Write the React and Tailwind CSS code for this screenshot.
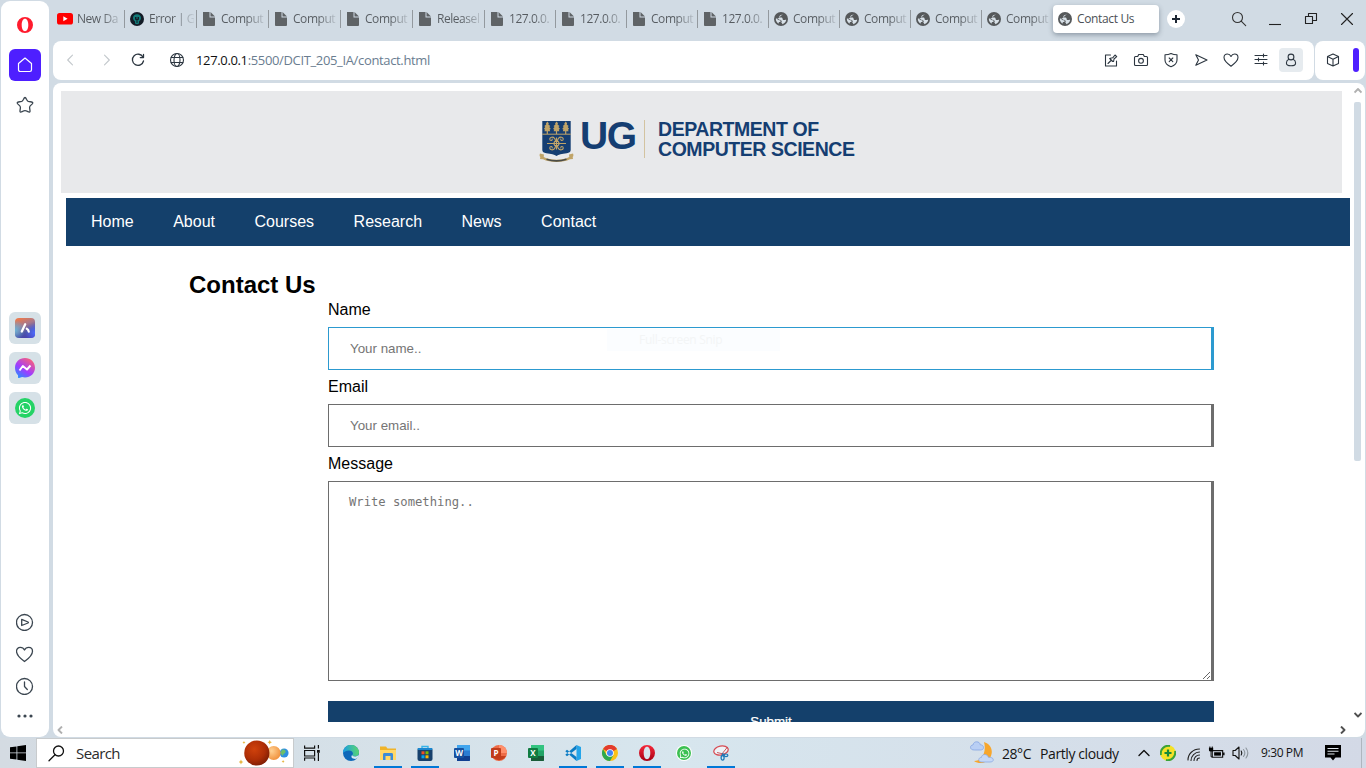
import React from "react";
import { FaWhatsapp } from "react-icons/fa";

const UI = "font-['Open_Sans','Noto_Sans',sans-serif]";
const ARIAL = "font-['Liberation_Sans',Arial,sans-serif]";

function FileIcon() {
  return (
    <svg width="14" height="16" viewBox="0 0 14 16" className="shrink-0">
      <path d="M1 1h6.500v5.500H13v7.300c0 .8-.4 1.200-1.200 1.200H2.200C1.400 15 1 14.600 1 13.800z" fill="#5f6366" />
      <path d="M8.500 1L13 5.500H8.500z" fill="#5f6366" />
    </svg>
  );
}

function EarthIcon() {
  return (
    <svg width="14" height="14" viewBox="0 0 14 14" className="shrink-0">
      <circle cx="7" cy="7" r="7" fill="#55585a" />
      <path d="M9.300 1.800c-.2 1-1.300 1-2.300 1.200-1 .3-1.700 1-1.700 1.900 0 .8.800.7 1.700.7s1.600.3 1.600 1.200.3 1.300 1.300 1.300 1.300-.4 2.300-.3c-.2 2-1.700 3.900-4 4.400.2-.9-.2-1.400-1-1.500.6-.9.700-1.700.1-2.300C6.600 7.700 5.500 8 4.700 7.200 4 6.600 3 6.300 1.800 6.700c0 2.300 1.300 4.200 3.200 5.100-.7-1-.3-1.700.4-1.900.7-.1 1.300-.4 1.300-1 0-.4-.4-.6-.9-.6-1 0-1.700-.5-2.600-1" fill="#d8e1e8" />
    </svg>
  );
}

function YoutubeIcon() {
  return (
    <svg width="16" height="12" viewBox="0 0 16 12" className="shrink-0">
      <rect width="16" height="11.500" rx="2.600" fill="#f00" />
      <path d="M6.300 3.300v5l4.300-2.500z" fill="#fff" />
    </svg>
  );
}

function GhostIcon() {
  return (
    <svg width="14" height="14" viewBox="0 0 14 14" className="shrink-0">
      <circle cx="7" cy="7" r="7" fill="#131b26" />
      <path d="M7 2.200c2.400 0 4 1.600 4 3.800 0 1.600-.9 2.700-2 3.500v2.100c-1.200.7-2.800.7-4 0V9.500C3.900 8.700 3 7.600 3 6c0-2.200 1.600-3.800 4-3.800z" fill="#127a78" />
      <path d="M7 5v6M5.500 5v2.500h3V5" stroke="#131b26" strokeWidth="1" fill="none" />
    </svg>
  );
}

const tabs = [
  ["yt", "New Da", true],
  ["gh", "Error | G", true],
  ["file", "Comput", true],
  ["file", "Comput", true],
  ["file", "Comput", true],
  ["file", "Releasel", true],
  ["file", "127.0.0.", false],
  ["file", "127.0.0.", false],
  ["file", "Comput", false],
  ["file", "127.0.0.", false],
  ["earth", "Comput", false],
  ["earth", "Comput", false],
  ["earth", "Comput", false],
  ["earth", "Comput", false],
];

const tabIcons = { yt: <YoutubeIcon />, gh: <GhostIcon />, file: <FileIcon />, earth: <EarthIcon /> };

function Tab({ kind, label, wide, last }) {
  return (
    <div className={`relative flex h-[38px] shrink-0 items-center pl-[4px] ${wide ? "w-[72px]" : "w-[71px]"}`}>
      <span className="flex w-[16px] shrink-0 justify-center">{tabIcons[kind]}</span>
      <span className="ml-[4px] w-[45px] whitespace-nowrap bg-linear-to-r from-[#565b60] from-55% to-[#565b6018] bg-clip-text text-[12px] leading-[18px] tracking-[-0.45px] text-transparent">
        {label}
      </span>
      {!last && <span className="absolute right-0 top-[10px] h-[18px] w-px bg-[#93999e]" />}
    </div>
  );
}

function Ico({ children, w = 16, h = 16, vb, sw = 1.1, color = "#2c3640", className = "" }) {
  return (
    <svg width={w} height={h} viewBox={vb || `0 0 ${w} ${h}`} fill="none" stroke={color} strokeWidth={sw} strokeLinecap="round" strokeLinejoin="round" className={`shrink-0 ${className}`}>
      {children}
    </svg>
  );
}

function TabBar() {
  return (
    <div className="flex h-[41px] items-start">
      {tabs.map(([k, l, w], i) => (
        <Tab key={i} kind={k} label={l} wide={w} last={i === tabs.length - 1} />
      ))}
      <div className="mt-[5px] flex h-[28px] w-[106px] shrink-0 items-center rounded-[4px] bg-white pl-[5px] shadow-[0_2px_5px_rgba(60,75,90,0.45)]">
        <EarthIcon />
        <span className="ml-[5px] text-[12px] leading-[18px] tracking-[-0.350px] text-[#4c5156]">Contact Us</span>
      </div>
      <div className="ml-[8px] mt-[10px] flex size-[18px] items-center justify-center rounded-full bg-white">
        <Ico w={8} h={8} sw={2} color="#1d2733"><path d="M4 0v8M0 4h8" strokeLinecap="butt" /></Ico>
      </div>
      <div className="ml-[46px] mt-[11px] flex h-[16px] items-center">
        <Ico color="#333"><circle cx="6.500" cy="6.500" r="5" /><path d="M10.200 10.200l4.500 4.500" /></Ico>
        <Ico className="ml-[21px]" w={14} color="#222"><path d="M1 13.500h12" strokeLinecap="butt" /></Ico>
        <Ico className="ml-[22px]" w={14} color="#222"><path d="M1.500 5.500h7v7h-7zM4.500 5.500v-3h8v7h-4" /></Ico>
        <Ico className="ml-[22px]" w={14} color="#222"><path d="M1.500 2.500l11 11M12.500 2.500l-11 11" /></Ico>
      </div>
    </div>
  );
}

function AddressBar() {
  return (
    <div className="flex h-[39px] gap-px">
      <div className="flex w-[1261px] items-center rounded-[8px] bg-white pb-px">
        <Ico className="ml-[9px]" color="#c3c8cc"><path d="M10.500 3.200L5.700 8l4.800 4.800" /></Ico>
        <Ico className="ml-[21px]" color="#c3c8cc"><path d="M5.500 3.200L10.300 8l-4.800 4.800" /></Ico>
        <Ico className="ml-[15px]" sw={1.300}><path d="M13 5.200A5.600 5.600 0 1 0 13.500 9M13.500 2.400v3.200h-3.200" /></Ico>
        <Ico className="ml-[23px]"><circle cx="8" cy="8" r="6.500" /><ellipse cx="8" cy="8" rx="3" ry="6.500" /><path d="M2.200 5.500h11.600M2.200 10.500h11.600" /></Ico>
        <span className="ml-[11px] w-[260px] whitespace-nowrap text-[13px] leading-[20px] tracking-[-0.350px] text-[#6a7d90]">
          <span className="text-[#111]">127.0.0.1</span>:5500/DCIT_205_IA/contact.html
        </span>
        <div className="ml-auto mr-[11px] flex items-center gap-[14px]">
          <Ico><path d="M7.500 3H2.500v11h11V9M5 11.500l3-3M6.700 6.500l3 3M7.300 6.200l2.400-.4 2.300-2.800 1.700 1.700-2.700 2.300-.4 2.400" /></Ico>
          <Ico><path d="M1.500 5.500c0-.5.500-1 1-1h2.200l1-2h4.600l1 2h2.200c.5 0 1 .5 1 1v7c0 .5-.5 1-1 1h-11c-.5 0-1-.5-1-1z" /><circle cx="8" cy="8.800" r="2.400" /></Ico>
          <Ico><path d="M8 1.500c2 1 4 1.300 6 1.300V8c0 3.300-2.500 5.500-6 6.700C4.500 13.500 2 11.300 2 8V2.800c2 0 4-.3 6-1.300zM6.200 6l3.600 3.600M9.800 6L6.200 9.600" /></Ico>
          <Ico><path d="M2.800 2.800L14 8 2.800 13.200 5.500 8z" /></Ico>
          <Ico><path d="M8 14.200C5 12 1 9 1 5.500 1 3.500 2.500 2 4.400 2 6 2 7.300 3 8 4.400 8.700 3 10 2 11.600 2 13.500 2 15 3.500 15 5.500 15 9 11 12 8 14.200z" /></Ico>
          <Ico sw={1.100}><path d="M2 3.500h12M2 7.500h12M2 11.500h12M10.500 2v3M5.500 6v3M10.500 10v3" /></Ico>
          <div className="-ml-[4px] flex size-[24px] items-center justify-center rounded-[4px] bg-[#e6ebef]">
            <Ico><circle cx="8" cy="5" r="2.900" /><path d="M5.800 7.300C4 8.200 3.400 9.700 3.400 11c0 2.200 1.600 2.800 4.600 2.800s4.600-.6 4.600-2.800c0-1.300-.6-2.800-2.400-3.700" /></Ico>
          </div>
        </div>
      </div>
      <div className="flex w-[50px] items-center rounded-[8px] bg-white pb-px pl-[10px]">
        <Ico><path d="M8 2l5.500 2.500v7L8 14l-5.500-2.500v-7zM2.500 4.500L8 7.200l5.500-2.700M8 7.200V14" /></Ico>
        <span className="ml-[12px] h-[24px] w-[6px] rounded-[3px] bg-[#4e1fff]" />
      </div>
    </div>
  );
}

function OperaO({ size, id, a = "#ff1b2d", b = "#c8102a" }) {
  return (
    <svg width={size} height={size} viewBox="0 0 16 16" className="shrink-0">
      <defs><linearGradient id={id} x1="0" y1="0" x2="0" y2="1"><stop stopColor={a} /><stop offset="1" stopColor={b} /></linearGradient></defs>
      <path fillRule="evenodd" fill={`url(#${id})`} d="M8 0a8 8 0 1 0 0 16A8 8 0 1 0 8 0zM8 1.800c2 0 3.300 2.700 3.300 6.200S10 14.200 8 14.200 4.700 11.500 4.700 8 6 1.800 8 1.800z" />
    </svg>
  );
}

function Sidebar() {
  const c = "#3b4650";
  return (
    <div className="ml-px mt-px flex h-[736px] w-[48px] shrink-0 flex-col items-center rounded-[9px] bg-white">
      <div className="mt-[16px]"><OperaO size={16} id="opSide" b="#ff1b2d" /></div>
      <div className="mt-[16px] flex size-[32px] items-center justify-center rounded-[6px] bg-[#4e1fff]">
        <Ico color="#fff" sw={1.200}><path d="M1.500 6.500L8 1l6.500 5.500v6.300c0 1.200-.7 1.700-1.700 1.700H3.200c-1 0-1.700-.5-1.700-1.700z" /></Ico>
      </div>
      <Ico className="mt-[15px]" w={18} h={18} color={c} sw={1.300}><path d="M9 1.500c.6 0 1 .7 1.600 2 .5 1 .9 1.700 1.600 1.900l3.400.6c1.400.3 1.500 1 .7 1.900l-2.100 2c-.6.600-.7 1.200-.6 2l.4 2.700c.2 1.400-.4 1.800-1.500 1.200-1.200-.5-2.400-1.100-3.500-1.100s-2.300.6-3.500 1.100c-1.100.600-1.700.2-1.500-1.200l.4-2.700c.1-.8 0-1.400-.6-2l-2.100-2C.9 7 1 6.300 2.400 6l3.400-.6c.7-.2 1.100-.9 1.600-1.900.6-1.300 1-2 1.600-2z" /></Ico>
      <div className="mt-[198px] flex flex-col gap-[8px]">
        <div className="flex size-[32px] items-center justify-center rounded-[6px] bg-[#d6e1e7]">
          <svg width="20" height="20" viewBox="0 0 20 20">
            <defs>
              <linearGradient id="aria" x1=".3" y1="0" x2=".7" y2="1"><stop stopColor="#e8794f" /><stop offset=".35" stopColor="#a8788c" /><stop offset=".7" stopColor="#4b55a8" /><stop offset="1" stopColor="#4a3fae" /></linearGradient>
              <radialGradient id="ariaL" cx="0" cy=".6" r=".5"><stop stopColor="#6ab4d8" /><stop offset="1" stopColor="#6ab4d8" stopOpacity="0" /></radialGradient>
              <radialGradient id="ariaR" cx="1" cy=".75" r=".5"><stop stopColor="#4f6cff" /><stop offset="1" stopColor="#4f6cff" stopOpacity="0" /></radialGradient>
            </defs>
            <rect width="20" height="20" rx="4" fill="url(#aria)" /><rect width="20" height="20" rx="4" fill="url(#ariaL)" /><rect width="20" height="20" rx="4" fill="url(#ariaR)" />
            <path d="M10.200 6.300L6.800 13.500M11.800 10.800c1.200.5 1.800 1.500 1.900 2.700" stroke="#fff" strokeWidth="2.300" strokeLinecap="round" fill="none" />
          </svg>
        </div>
        <div className="flex size-[32px] items-center justify-center rounded-[6px] bg-[#d6e1e7]">
          <svg width="20" height="20" viewBox="0 0 20 20">
            <defs><linearGradient id="msg" x1=".1" y1="1" x2=".8" y2="0"><stop stopColor="#1a96ff" /><stop offset=".45" stopColor="#a03cff" /><stop offset="1" stopColor="#ff6372" /></linearGradient></defs>
            <path d="M10 0c5.700 0 10 4.200 10 9.700s-4.300 9.700-10 9.700c-1 0-2-.1-2.900-.4L4 20c-.6.200-.9-.1-.9-.6l-.1-2.100C1.200 15.500 0 12.800 0 9.700 0 4.200 4.300 0 10 0z" fill="url(#msg)" />
            <path d="M4.500 12.500L7.800 8l4.200 3.500L15.500 7.500" fill="none" stroke="#fff" strokeWidth="1.900" strokeLinejoin="round" />
          </svg>
        </div>
        <div className="flex size-[32px] items-center justify-center rounded-[6px] bg-[#d6e1e7]">
          <span className="flex size-[20px] items-center justify-center rounded-full bg-[#25d366]"><FaWhatsapp size={14} color="#fff" /></span>
        </div>
      </div>
      <div className="mr-px mt-[189px] flex flex-col items-center gap-[14px]">
        <Ico w={18} h={18} vb="0.5 -0.5 18 18" color={c} sw={1.300}><circle cx="9" cy="9" r="8" /><path d="M6.200 5.800L12.500 8.500c.6.300.6.700 0 1L6.200 12z" /></Ico>
        <Ico w={18} h={18} vb="0.5 0 18 18" color={c} sw={1.300}><path d="M9 16.500C5.500 14 1 10.500 1 6.200 1 4 2.600 2.300 4.800 2.300 6.700 2.300 8.200 3.300 9 5c.8-1.700 2.300-2.700 4.200-2.700C15.400 2.300 17 4 17 6.200c0 4.300-4.500 7.800-8 10.300z" /></Ico>
        <Ico w={18} h={18} vb="0.5 -0.5 18 18" color={c} sw={1.300}><circle cx="9" cy="9" r="8" /><path d="M9 4.500V9l2.800 3" /></Ico>
      </div>
      <svg width="18" height="4" className="mt-[19px] shrink-0" fill={c}><circle cx="3" cy="2" r="1.600" /><circle cx="9" cy="2" r="1.600" /><circle cx="15" cy="2" r="1.600" /></svg>
    </div>
  );
}

function Crest() {
  const g = "#c0a468";
  return (
    <svg width="36" height="43" viewBox="0 0 36 43" className="shrink-0">
      <path d="M3.300 1h28.400v29c0 2-1.500 2.700-4 3.200-5 .800-8 1.200-10.200 2.800-2.200-1.600-5.200-2-10.200-2.800-2.500-.5-4-1.200-4-3.200z" fill="#153e72" />
      <path d="M3.300 14.200h28.400" stroke={g} />
      <g fill={g}>
        {[8.300, 17.500, 26.700].map((x) => (
          <g key={x} transform={`translate(${x} 1)`}>
            <path d="M0 .5l1.500 1.800L1 3.500l2 1.500-1 1 1.500 2-1.200.5.600 1.800H.6V13h-1.200v-2.700h-2.300l.6-1.800-1.200-.5L-2 6l-1-1 2-1.500-.5-.7z" />
          </g>
        ))}
      </g>
      <g fill="none" stroke={g} strokeWidth="1.100">
        <path d="M8 23.500h19M17.500 17.500v12" />
        <circle cx="17.500" cy="23.500" r="2.500" />
        <path d="M16.500 22c.3-3-1.500-5.200-4-4.800-2.200.4-2.300 3-.5 3.300 1.200.1 1.600-1.200.8-1.700M18.500 22c-.3-3 1.500-5.200 4-4.800 2.200.4 2.300 3 .5 3.300-1.200.1-1.600-1.200-.8-1.700M16.500 25c.3 3-1.500 5.200-4 4.800-2.200-.4-2.300-3-.5-3.300 1.200-.1 1.600 1.200.8 1.700M18.500 25c-.3 3 1.500 5.200 4 4.800 2.200-.4 2.300-3 .5-3.300-1.200-.1-1.600 1.200-.8 1.700" />
      </g>
      <path d="M1 33.500l4 1-.3 2.500c7 3.600 18.500 3.600 25.600 0L30 34.500l4-1c.6 1.300.6 2.500-.3 3.500l.3 2-3 .3c-7 3.600-20 3.600-27 0L1 39l.3-2C.4 36 .4 34.800 1 33.500z" fill={g} />
      <path d="M7.500 39.200c6 2 14 2 20 0" stroke="#4b4d48" strokeWidth="1.700" fill="none" />
    </svg>
  );
}

function PageView() {
  const label = "block h-[18px] text-[16px] leading-[18px] text-black";
  const field = "block w-[886px] border border-r-[3px] bg-transparent outline-none placeholder:text-[#757575] placeholder:opacity-100";
  return (
    <div className={`relative flex h-[654px] w-[1312px] flex-col overflow-hidden rounded-[8px] bg-white ${ARIAL}`}>
      <div className="flex h-[639px]">
        <div className="h-[639px] w-[1297px] overflow-hidden pl-[8px] pt-[8px]">
          <div className="flex h-[102px] w-[1281px] items-start bg-[#e8e9eb] pl-[478px] pt-[29px]">
            <Crest />
            <span className="ml-[5px] w-[64px] text-[39px] font-bold leading-[31px] tracking-[-1.500px] text-[#153e72]">UG</span>
            <span className="h-[38px] w-px bg-[#d3c3a0]" />
            <span className="ml-[13px] whitespace-nowrap text-[19.500px] font-bold leading-[20px] text-[#153e72]">
              <span className="-mt-[1.500px] block tracking-[-0.450px]">DEPARTMENT OF</span>
              <span className="block tracking-[-0.450px]">COMPUTER SCIENCE</span>
            </span>
          </div>
          <nav className="ml-[5px] mt-[5px] flex h-[48px] w-[1284px] items-center gap-[39.500px] bg-[#14406b] pl-[25px] text-[16px] leading-[18px] text-white">
            {["Home", "About", "Courses", "Research", "News", "Contact"].map((t) => <span key={t}>{t}</span>)}
          </nav>
          <main className="ml-[128px] mt-[25px]">
            <h1 className="h-[28px] text-[24px] font-bold leading-[28px] text-black">Contact Us</h1>
            <form className="ml-[139px] mt-[2px]">
              <label className={label}>Name</label>
              <input placeholder="Your name.." className={`${field} mt-[8px] h-[43px] border-[#2c9ad0] pl-[21px] text-[13.333px]`} />
              <label className={`${label} mt-[8px]`}>Email</label>
              <input placeholder="Your email.." className={`${field} mt-[8px] h-[43px] border-[#6d6d6d] pl-[21px] text-[13.333px]`} />
              <label className={`${label} mt-[8px]`}>Message</label>
              <textarea placeholder="Write something.." className={`${field} mt-[8px] h-[200px] resize border-[#6d6d6d] pl-[20px] pt-[12px] font-['DejaVu_Sans_Mono',monospace] text-[12.200px] leading-[16px]`} />
              <button type="button" className="mt-[20px] block h-[45px] w-[886px] bg-[#14406b] pb-[3px] text-center text-[13.333px] leading-[42px] text-white [-webkit-text-stroke:0.250px_white]">Submit</button>
            </form>
          </main>
        </div>
        <div className="flex w-[15px] flex-col items-center">
          <Ico className="mt-[3px]" w={8} h={8} sw={1.900} color="#b0b0b0"><path d="M.5 6.500L4 3l3.500 3.500" strokeLinecap="butt" /></Ico>
          <span className="mt-[8px] h-[359px] w-[7px] rounded-[2px] bg-[#d1dbe4]" />
          <Ico className="mb-[3px] mt-auto" w={8} h={8} sw={1.900} color="#505050"><path d="M.5 2L4 5.500 7.500 2" strokeLinecap="butt" /></Ico>
        </div>
      </div>
      <div className="flex h-[15px] items-center justify-between pl-[3px] pr-[19px]">
        <Ico w={7} h={8} sw={1.900} color="#b0b0b0"><path d="M6 .5L2.500 4 6 7.500" strokeLinecap="butt" /></Ico>
        <Ico w={7} h={8} sw={1.900} color="#505050"><path d="M2 .5L5.500 4 2 7.500" strokeLinecap="butt" /></Ico>
      </div>
      <div className={`pointer-events-none absolute left-[554px] top-[246px] flex h-[22px] w-[173px] items-center bg-[#fbfdff] pl-[32px] text-[12px] tracking-[-0.300px] text-[#f3f5f6] ${UI}`}>Full-screen Snip</div>
    </div>
  );
}

function Office({ letter, a, b, c, round }) {
  return (
    <span className="relative flex size-[16px] items-center">
      <svg width="16" height="16" viewBox="0 0 16 16">
        {round ? (
          <g><circle cx="8" cy="8" r="8" fill={a} /><path d="M8 0a8 8 0 0 1 8 8H8z" fill={b} /><path d="M1 11h14a8 8 0 0 1-14 0z" fill={c} /></g>
        ) : (
          <g><rect x="3" width="13" height="16" rx="1" fill={a} /><path d="M3 0h12a1 1 0 0 1 1 1v4.500H3z" fill={b} /><path d="M3 11h13v4a1 1 0 0 1-1 1H3z" fill={c} /></g>
        )}
      </svg>
      <span className={`absolute left-0 top-[3px] flex size-[10px] items-center justify-center rounded-[1px] text-[8px] font-bold leading-none text-white ${round ? "bg-[#c13b1b]" : letter === "W" ? "bg-[#17509e]" : "bg-[#107c41]"}`}>{letter}</span>
    </span>
  );
}

const S16 = ({ children }) => <svg width="16" height="16" viewBox="0 0 16 16">{children}</svg>;

const apps = [
  [false, <S16><defs><linearGradient id="edg" x1="0" y1=".3" x2="1" y2=".2"><stop stopColor="#1b9de2" /><stop offset="1" stopColor="#5bd86a" /></linearGradient></defs><circle cx="8" cy="8" r="8" fill="#0f68b9" /><path d="M0 8a8 8 0 0 1 16-.5c0 2.500-2 4-4.200 4-1.800 0-3-.7-2.300-1.700C11 7.500 8.500 5.500 6 5.500 3 5.500.5 7 0 8z" fill="url(#edg)" /><path d="M9.500 9.800c-.7 1 .5 1.700 2.300 1.700 1.500 0 3-.6 4.200-1.800-.3 1.500-1 2.700-1.800 3.600-1 .5-2 .7-3.200.5-2.500-.4-3.500-2.500-1.500-4z" fill="#d9eaf2" /></S16>],
  [true, <S16><path d="M0 1.500h6l1.500 2H16V15H0z" fill="#f0b429" /><path d="M0 5h16v10H0z" fill="#ffd867" /><path d="M3 15V9.500C3 8.700 3.500 8 4.500 8h7c1 0 1.500.7 1.500 1.500V15h-2.500v-4h-5v4z" fill="#3a8bd8" /></S16>],
  [true, <S16><path d="M5 4V1.500h6V4" fill="none" stroke="#36b3ea" strokeWidth="1.400" /><rect x=".5" y="3" width="15" height="13" rx="2" fill="#17406c" /><rect x=".5" y="3" width="15" height="2" rx="1" fill="#1a86cf" /><path d="M4.500 6.300h3v3h-3z" fill="#f25022" /><path d="M8.500 6.300h3v3h-3z" fill="#7fba00" /><path d="M4.500 10.300h3v3h-3z" fill="#00a4ef" /><path d="M8.500 10.300h3v3h-3z" fill="#ffb900" /></S16>],
  [false, <Office letter="W" a="#2b7cd3" b="#41a5ee" c="#103f91" />],
  [false, <Office letter="P" a="#ed6c47" b="#ff8f6b" c="#c43e1c" round />],
  [false, <Office letter="X" a="#21a366" b="#33c481" c="#185c37" />],
  [true, <S16><path d="M11.500 0L16 2v12l-4.500 2z" fill="#24a5ea" /><path d="M11.500 4L2 11.200.3 9.800 11.500 0zM11.500 12L2 4.800.3 6.200 11.500 16z" fill="#0a7bc4" /></S16>],
  [true, <S16><circle cx="8" cy="8" r="8" fill="#fbc116" /><path d="M8 8L1 4a8 8 0 0 1 14 0z" fill="#e33b2e" /><path d="M1.070 4A8 8 0 0 0 8 16l3.500-6H4.500z" fill="#2da94f" /><circle cx="8" cy="8" r="3.800" fill="#fff" /><circle cx="8" cy="8" r="3" fill="#4285f4" /></S16>],
  [true, <OperaO size={16} id="opTask" a="#f7283a" b="#a70014" />],
  [false, <span className="flex size-[16px] items-center justify-center rounded-full bg-white"><span className="flex size-[14px] items-center justify-center rounded-full bg-[#3cc052]"><FaWhatsapp size={11} color="#fff" /></span></span>],
  [true, <S16><ellipse cx="8" cy="5.500" rx="7.300" ry="4.500" transform="rotate(-12 8 5.500)" fill="#eef3f7" stroke="#d74a52" strokeWidth="1.200" /><path d="M14.500 2L8.500 9.500M4 7.500l6.500 1.500" stroke="#c2474f" strokeWidth=".9" /><ellipse cx="9.600" cy="12.800" rx="1.500" ry="2.300" fill="none" stroke="#1d78b8" strokeWidth="1.300" /><path d="M9.800 10.500V8M10 9.500l2 .5" stroke="#1d78b8" strokeWidth="1.200" /><ellipse cx="13" cy="10.300" rx="1.900" ry="1.300" fill="none" stroke="#1d78b8" strokeWidth="1.200" /></S16>],
];

function Taskbar() {
  return (
    <div className="mt-px flex h-[30px] w-[1366px] bg-linear-to-r from-[#d4dbe2] via-[#d7e6ee] to-[#d3d9e6]">
      <div className="flex w-[36px] items-center pl-[10px]">
        <svg width="16" height="16" viewBox="0 0 16 16"><path d="M0 2.300l6.500-.9v6H0zM7.300 1.300L16 0v7.400H7.300zM0 8.300h6.500v6.300L0 13.700zM7.300 8.300H16V16l-8.700-1.200z" /></svg>
      </div>
      <div className="flex w-[258px] items-center border border-[#c8cbcd] bg-white pl-[11px]">
        <Ico w={17} h={17} sw={1.300} color="#111"><circle cx="10.500" cy="6" r="5" /><path d="M7 9.800L1 15.800" /></Ico>
        <span className="ml-[11px] w-[60px] text-[15px] leading-[20px] tracking-[-0.600px] text-[#2b2b2b]">Search</span>
        <svg width="54" height="28" viewBox="0 0 54 28" className="ml-[104px]">
          <defs>
            <radialGradient id="mars" cx=".4" cy=".35" r=".7"><stop stopColor="#d0420c" /><stop offset=".6" stopColor="#ae2e06" /><stop offset="1" stopColor="#7a1d04" /></radialGradient>
            <radialGradient id="ven" cx=".35" cy=".35" r=".7"><stop stopColor="#ffd091" /><stop offset="1" stopColor="#f0913c" /></radialGradient>
          </defs>
          <circle cx="45.500" cy="14" r="4.500" fill="#2f8fe0" /><path d="M43.500 10.500c2-.5 4 .5 3.500 2.500s-2 1-2.500 3-2-1-2.500-2.500z" fill="#6cc06a" />
          <circle cx="35" cy="14" r="7" fill="url(#ven)" />
          <circle cx="18" cy="14" r="12.700" fill="url(#mars)" />
          <path d="M2 20.500l.8 1.700 1.700.8-1.700.8L2 25.500l-.8-1.700-1.700-.8 1.700-.8zM31 1l.7 1.500 1.500.7-1.500.7-.7 1.500-.7-1.500-1.500-.7 1.500-.7zM5 2l.5 1L6.500 3.500l-1 .5L5 5l-.5-1-1-.5 1-.5zM44.500 21l.5 1 1 .5-1 .5-.5 1-.5-1-1-.5 1-.5z" fill="#e6b53c" />
        </svg>
      </div>
      <div className="flex w-[39px] items-center pl-[10px]">
        <svg width="16" height="16" viewBox="0 0 16 16" fill="none" stroke="#111" strokeWidth="1.200"><path d="M.6.500v2.700h10V.500M.6 5.500h10v5.500H.6zM.6 15.700V13h10v2.700M14.400 0v3.500M14.400 8v8" /><path d="M13 5h2.800v2.800H13z" fill="#111" stroke="none" /></svg>
      </div>
      {apps.map(([open, icon], i) => (
        <div key={i} className="flex h-[30px] w-[37px] flex-col items-start pl-[4px]">
          <span className="ml-[6px] mt-[7px] size-[16px]">{icon}</span>
          {open && <span className="mt-[5px] h-[2px] w-[28px] bg-[#0078d7]" />}
        </div>
      ))}
      <div className="ml-auto flex h-[30px] items-center text-[#141414]">
        <svg width="24" height="24" viewBox="0 0 24 24" className="ml-px">
          <path d="M14 1c7 2 10 9 6 16-3.500 5.500-11 6.500-16 3 7 0 13-8 10-19z" fill="#f7a62c" />
          <path d="M4.500 9C2 9 .5 8 .5 6.300.5 4.800 1.700 4 3 4 3.500 1.500 5 .8 6.700.8c2 0 3.200 1.200 3.600 3C12 3.800 13.500 4.800 13.500 6.500S12.300 9 10.500 9z" fill="#b9cff4" stroke="#85a5e2" strokeWidth=".8" />
          <path d="M12 21c-2 0-3.200-.8-3.200-2.300 0-1.300 1-2.200 2.500-2.200.4-2 1.700-3 3.500-3s3 1 3.500 2.700c3 0 5 .9 5 2.500S22 21 20 21z" fill="#c6d8f6" stroke="#8caae2" strokeWidth=".8" />
        </svg>
        <span className="ml-[8px] w-[38px] text-[14px] tracking-[-0.450px]">28°C</span>
        <span className="w-[98px] whitespace-nowrap text-[14px] tracking-[-0.400px]">Partly cloudy</span>
        <Ico w={12} h={12} sw={1.400} color="#111"><path d="M1 8.500l5-5 5 5" /></Ico>
        <svg width="16" height="16" viewBox="0 0 16 16" className="ml-[10px]"><circle cx="8" cy="8" r="7.800" fill="#f5e126" /><path d="M1 10A7.500 7.500 0 0 1 10 1M15 6a7.500 7.500 0 0 1-9 9" stroke="#3aa23a" strokeWidth="2" fill="none" /><path d="M8 4.500v7M4.500 8h7" stroke="#178a3a" strokeWidth="2.200" /></svg>
        <Ico className="ml-[11px] mt-[3px]" w={14} h={14} sw={1.100} color="#222"><path d="M1 12C1 6 6 1 12.500 1M4 12.500C4 8 8 4 12.500 4M7 12.500C7 9.500 9.500 7 12.500 7M10 12.500C10 11 11 10 12.500 10" /></Ico>
        <svg width="17" height="14" viewBox="0 0 18 14" className="ml-[7px]"><path d="M4.500 4.500h11v7h-11z" fill="none" stroke="#111" strokeWidth="1.200" /><path d="M6.500 6.200h7.200v3.600H6.500z" /><path d="M16 6.500h1.500v3H16zM1 1.500h4.500V4c0 1-1 1.500-2.300 1.500S1 5 1 4zM1.500 0h1v1.500h-1zM4 0h1v1.500H4z" /><path d="M3.200 5v6h1.300" fill="none" stroke="#111" /></svg>
        <Ico className="ml-[7px]" w={17} h={16} sw={1.100} color="#111"><path d="M1 5.500h2.200L7 2v12l-3.800-3.500H1zM9.200 6c.8 1.200.8 2.800 0 4" /><path d="M11.500 4.500c1.500 2 1.500 5 0 7M14 3c2.200 3 2.200 7 0 10" stroke="#8c959c" /></Ico>
        <span className="ml-[12px] w-[64px] whitespace-nowrap text-[12px] tracking-[-0.400px]">9:30 PM</span>
        <svg width="16" height="16" viewBox="0 0 16 16"><path d="M0 0h16v12.500h-5.500L8 15.500l-2.500-3H0z" /><path d="M2.500 3.500h11M2.500 6.200h11M2.500 9h7" stroke="#dfe5ec" strokeWidth="1.100" /></svg>
        <span className="ml-[20px] mr-[4px] h-[30px] w-px bg-[#aeb6bf]" />
      </div>
    </div>
  );
}

export default function App() {
  return (
    <div className={`flex h-[768px] w-[1366px] flex-col overflow-hidden bg-[#d1dbe4] ${UI}`}>
      <div className="flex h-[737px]">
        <Sidebar />
        <div className="ml-[4px] flex w-[1313px] flex-col">
          <TabBar />
          <AddressBar />
          <div className="h-[3px]" />
          <PageView />
        </div>
      </div>
      <Taskbar />
    </div>
  );
}
